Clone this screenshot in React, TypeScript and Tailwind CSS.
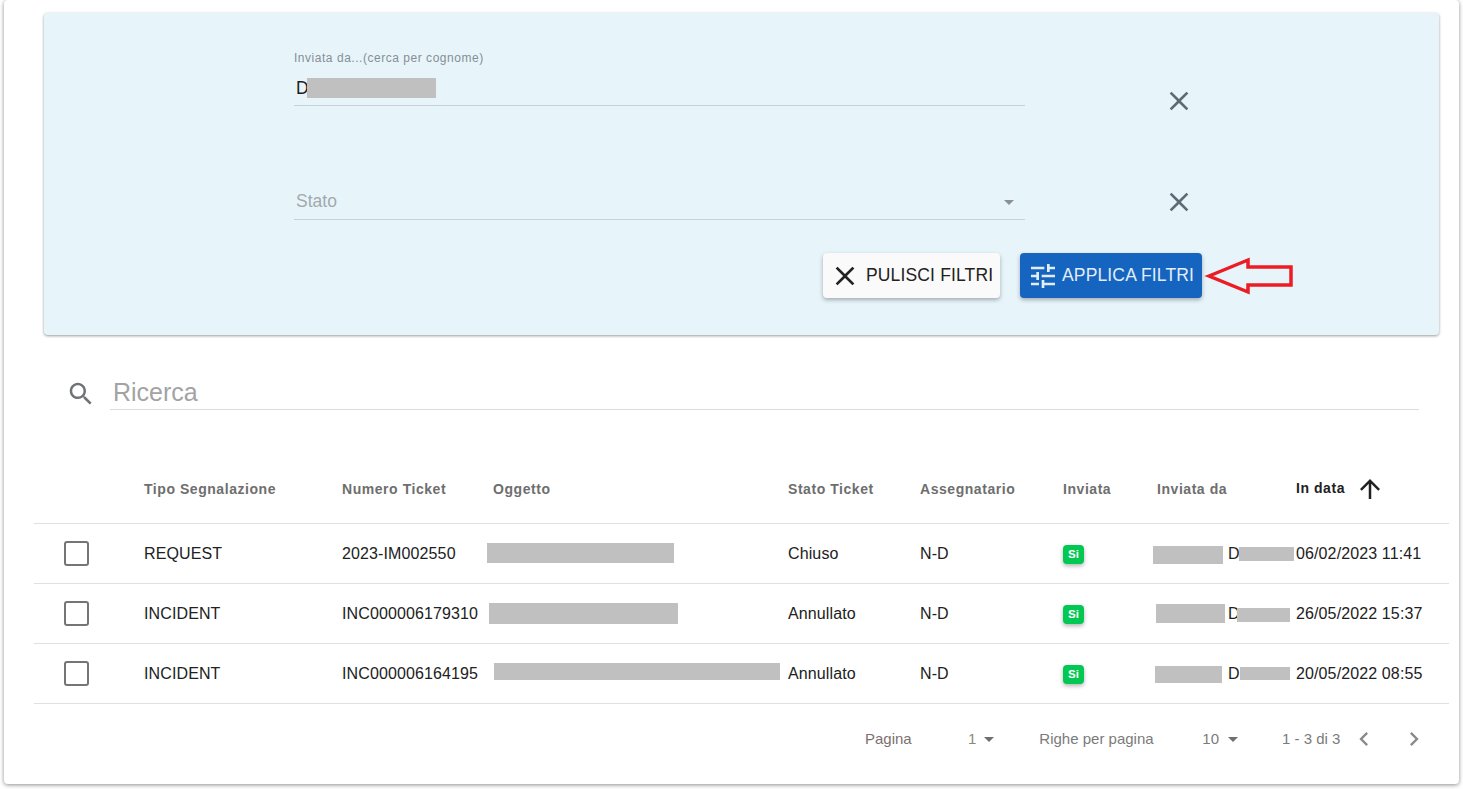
import React from 'react';

const ICONS = {
  close: 'M19 6.41 17.59 5 12 10.59 6.41 5 5 6.41 10.59 12 5 17.59 6.41 19 12 13.41 17.59 19 19 17.59 13.41 12z',
  tune: 'M3 17v2h6v-2H3zM3 5v2h10V5H3zm10 16v-2h8v-2h-8v-2h-2v6h2zM7 9v2H3v2h4v2h2V9H7zm14 4v-2H11v2h10zm-6-4h2V7h4V5h-4V3h-2v6z',
  search:
    'M15.5 14h-.79l-.28-.27C15.41 12.59 16 11.11 16 9.5 16 5.91 13.09 3 9.5 3S3 5.91 3 9.5 5.91 16 9.5 16c1.61 0 3.09-.59 4.23-1.57l.27.28v.79l5 4.99L20.49 19l-4.99-5zm-6 0C7.01 14 5 11.99 5 9.5S7.01 5 9.5 5 14 7.01 14 9.5 11.99 14 9.5 14z',
  up: 'M4 12l1.41 1.41L11 7.83V20h2V7.83l5.58 5.59L20 12l-8-8-8 8z',
  drop: 'M7 10l5 5 5-5z',
  left: 'M15.41 7.41 14 6l-6 6 6 6 1.41-1.41L10.83 12z',
  right: 'M10 6 8.59 7.41 13.17 12l-4.58 4.59L10 18l6-6z',
};

function Icon({ name, className }: { name: keyof typeof ICONS; className: string }) {
  return (
    <svg viewBox="0 0 24 24" fill="currentColor" className={className}>
      <path d={ICONS[name]} />
    </svg>
  );
}

function Redacted({ className }: { className: string }) {
  return <div className={`bg-[#c0c0c0] shrink-0 ${className}`} />;
}

const GRID = 'grid grid-cols-[110px_198px_145px_301px_132px_143px_90px_143px_153px] items-center';

const ROWS = [
  {
    tipo: 'REQUEST',
    numero: '2023-IM002550',
    stato: 'Chiuso',
    data: '06/02/2023 11:41',
    oggetto: 'ml-0 w-[187px] h-[20px] -mt-[2px]',
    nome: 'ml-0 w-[70px] h-[18px] mt-[2px]',
    gap: 'ml-[5px]',
    cognome: '-ml-[1px] w-[55px] h-[14px]',
  },
  {
    tipo: 'INCIDENT',
    numero: 'INC000006179310',
    stato: 'Annullato',
    data: '26/05/2022 15:37',
    oggetto: 'ml-[2px] w-[189px] h-[21px] -mt-[1px]',
    nome: 'ml-[3px] w-[69px] h-[19px]',
    gap: 'ml-[3px]',
    cognome: '-ml-[3px] w-[53px] h-[14px] mt-[2px]',
  },
  {
    tipo: 'INCIDENT',
    numero: 'INC000006164195',
    stato: 'Annullato',
    data: '20/05/2022 08:55',
    oggetto: 'ml-[7px] w-[286px] h-[17px] -mt-[4px]',
    nome: 'ml-[2px] w-[67px] h-[17px] mt-[2px]',
    gap: 'ml-[6px]',
    cognome: 'w-[50px] h-[13px]',
  },
];

function FilterField({ label, redacted, placeholder }: { label?: string; redacted?: boolean; placeholder?: string }) {
  return (
    <div className="w-[731px]">
      {label && <div className="text-[12px] leading-[14px] tracking-[0.53px] text-[#868e94] mb-[9px]">{label}</div>}
      <div className="relative h-[32px] border-b border-[#c5d3dc] flex items-center pl-[2px]">
        {redacted && (
          <>
            <span className="text-[17.5px] text-[#1c1c1c] -mt-[3px]">D</span>
            <Redacted className="w-[129px] h-[20px] -mt-[3px] -ml-[2px]" />
          </>
        )}
        {placeholder && <span className="text-[17.5px] text-[#a2a9ad] -mt-[4px]">{placeholder}</span>}
        {placeholder && (
          <Icon name="drop" className="absolute right-[4px] top-[2px] w-[24px] h-[24px] text-[#8b9093]" />
        )}
      </div>
    </div>
  );
}

export default function App() {
  return (
    <div className="h-[789px] overflow-hidden bg-white font-['Liberation_Sans',sans-serif] text-[16px] text-[#212121]">
      <div className="relative mx-[4px] h-[784px] w-[1455px] bg-white rounded-[4px] shadow-[0_1px_4px_rgba(0,0,0,0.45)] pt-[13px]">
        {/* filter panel */}
        <div className="relative ml-[40px] mr-[20px] h-[322px] bg-[#e7f5fb] rounded-[4px] shadow-[0_1px_3px_rgba(0,0,0,0.4)] pl-[250px] pt-[38px]">
          <div className="flex items-end">
            <FilterField label="Inviata da...(cerca per cognome)" redacted />
            <Icon name="close" className="ml-[138px] -mb-[11px] w-[32px] h-[32px] text-[#5f6b72]" />
          </div>
          <div className="flex items-end mt-[80px]">
            <FilterField placeholder="Stato" />
            <Icon name="close" className="ml-[138px] mb-[2px] w-[32px] h-[32px] text-[#5f6b72]" />
          </div>
          <div className="flex mt-[33px] ml-[529px] gap-[20px]">
            <button className="flex items-center w-[177px] h-[45px] pl-[6px] rounded-[4px] bg-[#fafafa] shadow-[0_2px_4px_rgba(0,0,0,0.3)] text-[17.5px] tracking-[0.15px] text-[#212121] whitespace-nowrap">
              <Icon name="close" className="w-[32px] h-[32px] mr-[5px] shrink-0" />
              PULISCI FILTRI
            </button>
            <button className="flex items-center w-[182px] h-[45px] pl-[7px] rounded-[4px] bg-[#1565c0] shadow-[0_2px_4px_rgba(0,0,0,0.3)] text-[17.5px] tracking-[0.15px] text-[#e3edf8] whitespace-nowrap">
              <Icon name="tune" className="w-[32px] h-[32px] mr-[3px] shrink-0" />
              APPLICA FILTRI
            </button>
          </div>
          {/* annotation arrow */}
          <svg className="absolute left-[1160px] top-[242px] w-[90px] h-[42px]" viewBox="0 0 90 42">
            <polygon
              points="5,21 44,5 44,12 87,12 87,30 44,30 44,37"
              fill="none"
              stroke="#ed1c24"
              strokeWidth="3.5"
            />
          </svg>
        </div>

        {/* search */}
        <div className="flex items-end ml-[62px] mr-[40px] mt-[39px]">
          <Icon name="search" className="w-[30px] h-[30px] text-[#6f7378] mb-[1px] shrink-0" />
          <div className="ml-[14px] flex-1 h-[36px] border-b border-[#dcdcdc] pl-[3px] text-[25px] leading-[36px] text-[#a3a3a3]">
            Ricerca
          </div>
        </div>

        {/* table */}
        <div className="ml-[30px] mr-[10px] mt-[44px]">
          <div className={`${GRID} h-[70px] border-b border-[#e0e0e0] text-[14px] font-bold text-[#6e6e6e] tracking-[0.55px]`}>
            <div />
            <div className="pt-[1px]">Tipo Segnalazione</div>
            <div className="pt-[1px]">Numero Ticket</div>
            <div className="pl-[6px] pt-[1px]">Oggetto</div>
            <div className="pt-[1px]">Stato Ticket</div>
            <div className="pt-[1px]">Assegnatario</div>
            <div className="pt-[1px]">Inviata</div>
            <div className="pl-[4px] pt-[1px]">Inviata da</div>
            <div className="flex items-center text-[#212121]">
              In data
              <Icon name="up" className="ml-[10px] w-[30px] h-[30px]" />
            </div>
          </div>
          {ROWS.map((row) => (
            <div key={row.numero} className={`${GRID} h-[60px] border-b border-[#e0e0e0] tracking-[0.12px]`}>
              <div className="pl-[30px]">
                <div className="w-[25px] h-[25px] rounded-[3px] border-2 border-[#757575]" />
              </div>
              <div className="pt-[1px]">{row.tipo}</div>
              <div>{row.numero}</div>
              <div>
                <Redacted className={row.oggetto} />
              </div>
              <div>{row.stato}</div>
              <div>N-D</div>
              <div className="-mt-[2px]">
                <span className="inline-flex items-center justify-center w-[21px] h-[19px] rounded-[4px] bg-[#00c853] text-white text-[11.5px] font-bold shadow-[0_2px_4px_rgba(0,0,0,0.3)]">
                  Si
                </span>
              </div>
              <div className="flex items-center">
                <Redacted className={row.nome} />
                <span className={row.gap}>D</span>
                <Redacted className={row.cognome} />
              </div>
              <div className="whitespace-nowrap">{row.data}</div>
            </div>
          ))}
        </div>

        {/* pagination */}
        <div className="flex items-center h-[24px] mt-[23px] pl-[861px] text-[15px] text-[#7b7b7b] whitespace-nowrap">
          <span className="w-[103px] text-[#7d6f6f]">Pagina</span>
          <span className="text-[#8d8a70]">1</span>
          <Icon name="drop" className="w-[24px] h-[24px] ml-[1px] text-[#6f6f6f]" />
          <span className="ml-[38px] w-[163px]">Righe per pagina</span>
          <span>10</span>
          <Icon name="drop" className="w-[24px] h-[24px] ml-[2px] text-[#6f6f6f]" />
          <span className="ml-[37px]">1 - 3 di 3</span>
          <Icon name="left" className="w-[28px] h-[28px] ml-[10px] text-[#8a8a8a]" />
          <Icon name="right" className="w-[28px] h-[28px] ml-[22px] text-[#8a8a8a]" />
        </div>
      </div>
    </div>
  );
}
